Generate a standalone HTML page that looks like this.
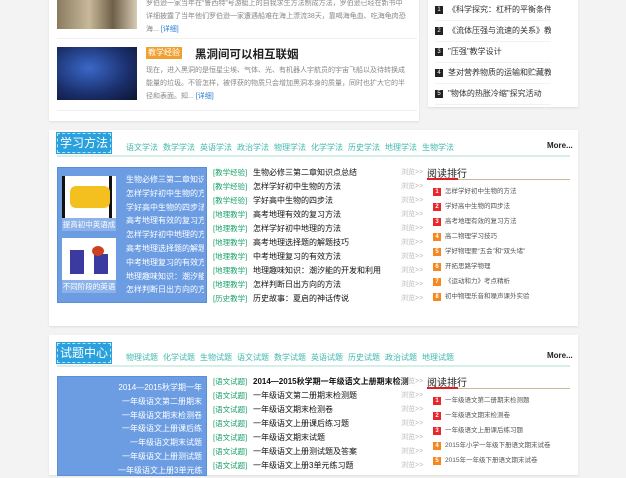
<!DOCTYPE html>
<html><head><meta charset="utf-8"><style>
*{margin:0;padding:0;box-sizing:border-box}
body{width:626px;height:470px;overflow:hidden;background:#f3f3f3;font-family:"Liberation Sans","Noto Sans CJK SC",sans-serif;position:relative}
.a{position:absolute;white-space:nowrap}
.card{position:absolute;background:#fff;box-shadow:0 1px 2px #ddd}
.tab{position:absolute;left:57px;width:54px;height:20px;background:#2aa0dc;color:#fff;font-size:12px;line-height:18px;text-align:center;border:1px dashed #bfe4f6;outline:1px solid #2aa0dc}
.nav{position:absolute;font-size:8px;color:#40b8b0;white-space:nowrap}
.nav span{display:inline-block;width:37px}
.more{position:absolute;left:547px;font-size:8px;font-weight:bold;color:#222}
.line{position:absolute;left:57px;width:513px;height:2px;background:#d6efe8}
.box{position:absolute;left:57px;width:150px;background:#6c9de3;border:1px solid #5a8fd8}
.box .t{position:absolute;left:68px;color:#fff;font-size:8px;line-height:13.8px;width:78px;overflow:hidden;white-space:nowrap}
.li{position:absolute;left:213px;font-size:8px;line-height:14px;color:#111;white-space:nowrap}
.li b{font-weight:normal;color:#1aa26a;display:inline-block;width:40px;font-size:7.5px}
.li i{font-style:normal;position:absolute;left:188px;color:#bbb;font-size:7px}
.rk{position:absolute;left:427px;width:143px}
.rk h4{font-weight:normal;font-size:10px;color:#222;height:15px;border-bottom:1px solid #c9b89a;position:relative}
.rk h4:after{content:"";position:absolute;left:0;bottom:-1px;width:31px;height:2px;background:#e02020}
.rk p{position:relative;font-size:6.5px;color:#555;height:15px;line-height:15px;padding-left:18px;white-space:nowrap}
.rk p s{text-decoration:none;position:absolute;left:6px;top:4px;width:8px;height:8px;color:#fff;font-size:6px;line-height:8px;text-align:center;font-weight:bold}
.r{background:#e8262b}.o{background:#f5871e}
.tl div{border-bottom:1px solid #f2f2f2;width:116px;overflow:hidden}
.tl s{text-decoration:none;display:inline-block;width:8px;height:8px;background:#222;color:#fff;font-size:6px;line-height:8px;text-align:center;margin-right:5px;vertical-align:middle}
</style></head><body>

<div class="card" style="left:49px;top:-5px;width:370px;height:126px"></div>
<div class="a" style="left:57px;top:0;width:80px;height:29px;background:linear-gradient(90deg,#8a7a60,#c9b99a 40%,#6e6048 70%,#d8ccb4)"></div>
<div class="a" style="left:146px;top:-3px;font-size:7px;line-height:13px;color:#888">罗伯逊一家当年在“鲁西特”号游艇上的自我求生方法制成方法，罗伯逊已经在新书中<br>详细披露了当年他们罗伯逊一家遭遇船难在海上漂流38天，靠喝海龟血、吃海龟肉恐<br>海... <span style="color:#2a7fd0">[详细]</span></div>
<div class="a" style="left:57px;top:38px;width:360px;height:1px;background:#f0f0f0"></div>
<div class="a" style="left:57px;top:47px;width:80px;height:53px;background:radial-gradient(ellipse at 40% 40%,#3a68c8,#1a2e6a 60%,#0c1530)"></div>
<div class="a" style="left:146px;top:47px;width:36px;height:12px;background:#f0a030;color:#fff;font-size:8px;line-height:12px;text-align:center">教学经验</div>
<div class="a" style="left:195px;top:46px;font-size:11.5px;font-weight:bold;color:#222">黑洞间可以相互联姻</div>
<div class="a" style="left:146px;top:64px;font-size:7px;line-height:13px;color:#888">现在，进入黑洞的是恒星尘埃、气体、光、有机器人宇航员的宇宙飞船以及待转换成<br>能量的垃圾。不管怎样，被俘获的物质只会增加黑洞本身的质量，同时也扩大它的半<br>径和表面。知... <span style="color:#2a7fd0">[详细]</span></div>
<div class="a" style="left:57px;top:110px;width:360px;height:1px;background:#f0f0f0"></div>

<div class="card" style="left:428px;top:-5px;width:150px;height:112px"></div>
<div class="a tl" style="left:435px;top:0;font-size:8px;color:#333;line-height:20px">
<div><s>1</s>《科学探究：杠杆的平衡条件》教</div>
<div><s>2</s>《流体压强与流速的关系》教学设</div>
<div><s>3</s>"压强"教学设计</div>
<div><s>4</s>茎对营养物质的运输和贮藏教案设</div>
<div><s>5</s>"物体的热胀冷缩"探究活动</div>
</div>

<!-- section 1 -->
<div class="card" style="left:49px;top:130px;width:529px;height:196px"></div>
<div class="tab" style="top:133px">学习方法</div>
<div class="nav" style="left:126px;top:142px"><span>语文学法</span><span>数学学法</span><span>英语学法</span><span>政治学法</span><span>物理学法</span><span>化学学法</span><span>历史学法</span><span>地理学法</span><span>生物学法</span></div>
<div class="more" style="top:141px">More...</div>
<div class="line" style="top:155px"></div>
<div class="box" style="top:167px;height:136px">
<div class="a" style="left:4px;top:8px;width:54px;height:42px;background:#fff"><div style="position:absolute;left:0;top:0;width:3px;height:42px;background:#111"></div><div style="position:absolute;right:4px;top:0;width:3px;height:42px;background:#111"></div><div style="position:absolute;left:8px;top:10px;width:40px;height:22px;background:#f3c020;border-radius:6px"></div></div>
<div class="a" style="left:4px;top:50px;width:54px;height:13px;background:#8db2ea;color:#fff;font-size:7.5px;text-align:center;line-height:13px">提高初中英语成</div>
<div class="a" style="left:4px;top:70px;width:54px;height:42px;background:#fff"><div style="position:absolute;left:8px;top:12px;width:14px;height:24px;background:#3a3aa0"></div><div style="position:absolute;left:32px;top:16px;width:14px;height:20px;background:#3a3aa0"></div><div style="position:absolute;left:30px;top:8px;width:12px;height:10px;background:#d04020;border-radius:50%"></div></div>
<div class="a" style="left:4px;top:112px;width:54px;height:13px;background:#8db2ea;color:#fff;font-size:7.5px;text-align:center;line-height:13px">不同阶段的英语</div>
<div class="t" style="top:5px">生物必修三第二章知识<br>怎样学好初中生物的方<br>学好高中生物的四步法<br>高考地理有效的复习方<br>怎样学好初中地理的方<br>高考地理选择题的解题<br>中考地理复习的有效方<br>地理趣味知识：潮汐能<br>怎样判断日出方向的方</div>
</div>
<div class="li" style="top:166px"><b>[教学经验]</b>生物必修三第二章知识点总结<i>浏览&gt;&gt;</i></div>
<div class="li" style="top:180px"><b>[教学经验]</b>怎样学好初中生物的方法<i>浏览&gt;&gt;</i></div>
<div class="li" style="top:194px"><b>[教学经验]</b>学好高中生物的四步法<i>浏览&gt;&gt;</i></div>
<div class="li" style="top:208px"><b>[地理教学]</b>高考地理有效的复习方法<i>浏览&gt;&gt;</i></div>
<div class="li" style="top:222px"><b>[地理教学]</b>怎样学好初中地理的方法<i>浏览&gt;&gt;</i></div>
<div class="li" style="top:236px"><b>[地理教学]</b>高考地理选择题的解题技巧<i>浏览&gt;&gt;</i></div>
<div class="li" style="top:250px"><b>[地理教学]</b>中考地理复习的有效方法<i>浏览&gt;&gt;</i></div>
<div class="li" style="top:264px"><b>[地理教学]</b>地理趣味知识：潮汐能的开发和利用<i>浏览&gt;&gt;</i></div>
<div class="li" style="top:278px"><b>[地理教学]</b>怎样判断日出方向的方法<i>浏览&gt;&gt;</i></div>
<div class="li" style="top:292px"><b>[历史教学]</b>历史故事：夏启的神话传说<i>浏览&gt;&gt;</i></div>
<div class="rk" style="top:165px"><h4>阅读排行</h4>
<div style="height:4px"></div>
<p><s class="r">1</s>怎样学好初中生物的方法</p>
<p><s class="r">2</s>学好高中生物的四步法</p>
<p><s class="r">3</s>高考地理有效的复习方法</p>
<p><s class="o">4</s>高二物理学习技巧</p>
<p><s class="o">5</s>学好物理要“五会”和“双头堵”</p>
<p><s class="o">6</s>开拓思路学物理</p>
<p><s class="o">7</s>《运动和力》考点精析</p>
<p><s class="o">8</s>初中物理乐音和噪声课外实验</p>
</div>

<!-- section 2 -->
<div class="card" style="left:49px;top:335px;width:529px;height:140px"></div>
<div class="tab" style="top:343px">试题中心</div>
<div class="nav" style="left:126px;top:352px"><span>物理试题</span><span>化学试题</span><span>生物试题</span><span>语文试题</span><span>数学试题</span><span>英语试题</span><span>历史试题</span><span>政治试题</span><span>地理试题</span></div>
<div class="more" style="top:351px">More...</div>
<div class="line" style="top:365px"></div>
<div class="box" style="top:376px;height:100px">
<div class="t" style="top:4px;left:60px;width:84px;text-align:right">2014—2015秋学期一年<br>一年级语文第二册期末<br>一年级语文期末检测卷<br>一年级语文上册课后练<br>一年级语文期末试题<br>一年级语文上册测试题<br>一年级语文上册3单元练</div>
</div>
<div class="li" style="top:375px"><b>[语文试题]</b><span style="font-weight:bold">2014—2015秋学期一年级语文上册期末检测</span><i>浏览&gt;&gt;</i></div>
<div class="li" style="top:389px"><b>[语文试题]</b>一年级语文第二册期末检测题<i>浏览&gt;&gt;</i></div>
<div class="li" style="top:403px"><b>[语文试题]</b>一年级语文期末检测卷<i>浏览&gt;&gt;</i></div>
<div class="li" style="top:417px"><b>[语文试题]</b>一年级语文上册课后练习题<i>浏览&gt;&gt;</i></div>
<div class="li" style="top:431px"><b>[语文试题]</b>一年级语文期末试题<i>浏览&gt;&gt;</i></div>
<div class="li" style="top:445px"><b>[语文试题]</b>一年级语文上册测试题及答案<i>浏览&gt;&gt;</i></div>
<div class="li" style="top:459px"><b>[语文试题]</b>一年级语文上册3单元练习题<i>浏览&gt;&gt;</i></div>
<div class="rk" style="top:374px"><h4>阅读排行</h4>
<div style="height:4px"></div>
<p><s class="r">1</s>一年级语文第二册期末检测题</p>
<p><s class="r">2</s>一年级语文期末检测卷</p>
<p><s class="r">3</s>一年级语文上册课后练习题</p>
<p><s class="o">4</s>2015年小学一年级下册语文期末试卷</p>
<p><s class="o">5</s>2015年一年级下册语文期末试卷</p>
</div>
</body></html>
